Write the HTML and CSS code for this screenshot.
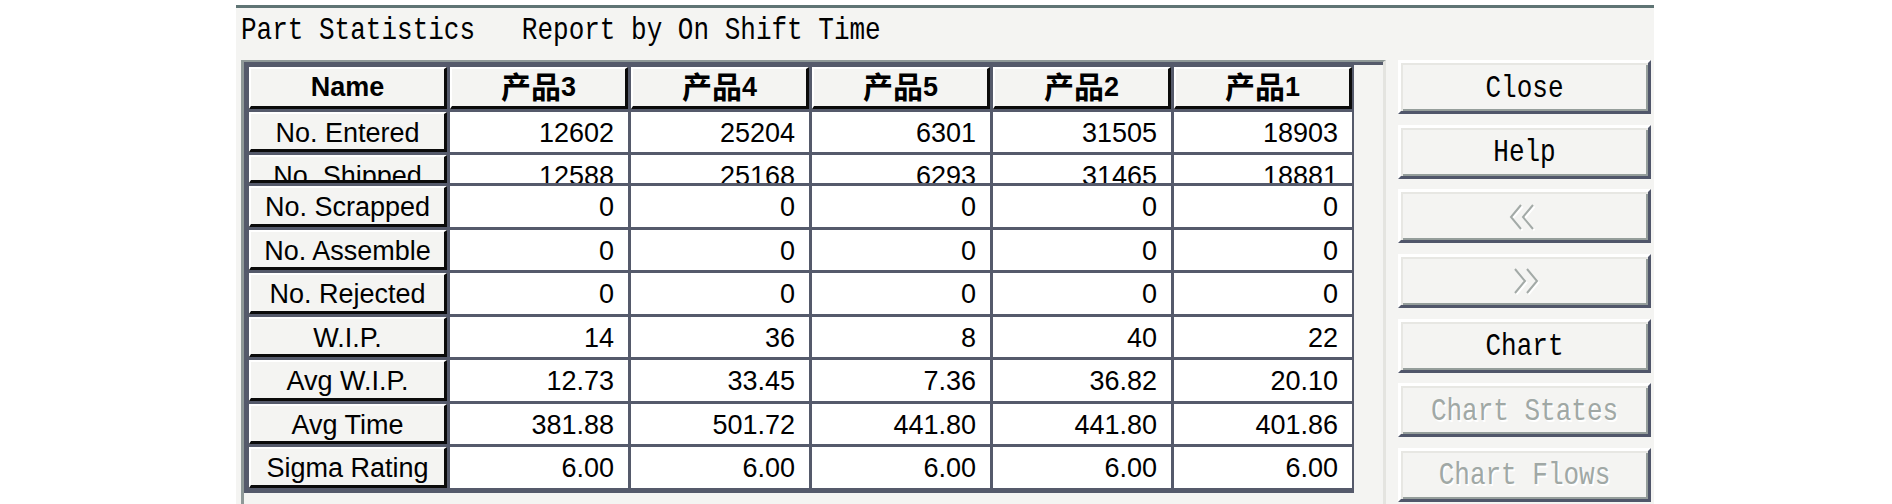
FILE: index.html
```html
<!DOCTYPE html>
<html>
<head>
<meta charset="utf-8">
<link rel="stylesheet" href="styles.css">
</head>
<body>
<div class="page">
  <div class="dialog">
    <div class="title"><span class="mono">Part Statistics   Report by On Shift Time</span></div>
    <div class="main">
      <div class="frame">
        <div class="frame-in">
          <div class="grid">
            <div class="hd bold">Name</div>
            <div class="hd bold"><span class="cjk">产品</span>3</div>
            <div class="hd bold"><span class="cjk">产品</span>4</div>
            <div class="hd bold"><span class="cjk">产品</span>5</div>
            <div class="hd bold"><span class="cjk">产品</span>2</div>
            <div class="hd bold"><span class="cjk">产品</span>1</div>

            <div class="lbl">No. Entered</div>
            <div class="c">12602</div><div class="c">25204</div><div class="c">6301</div><div class="c">31505</div><div class="c">18903</div>

            <div class="lbl">No. Shipped</div>
            <div class="c">12588</div><div class="c">25168</div><div class="c">6293</div><div class="c">31465</div><div class="c">18881</div>

            <div class="lbl">No. Scrapped</div>
            <div class="c">0</div><div class="c">0</div><div class="c">0</div><div class="c">0</div><div class="c">0</div>

            <div class="lbl">No. Assemble</div>
            <div class="c">0</div><div class="c">0</div><div class="c">0</div><div class="c">0</div><div class="c">0</div>

            <div class="lbl">No. Rejected</div>
            <div class="c">0</div><div class="c">0</div><div class="c">0</div><div class="c">0</div><div class="c">0</div>

            <div class="lbl">W.I.P.</div>
            <div class="c">14</div><div class="c">36</div><div class="c">8</div><div class="c">40</div><div class="c">22</div>

            <div class="lbl">Avg W.I.P.</div>
            <div class="c">12.73</div><div class="c">33.45</div><div class="c">7.36</div><div class="c">36.82</div><div class="c">20.10</div>

            <div class="lbl">Avg Time</div>
            <div class="c">381.88</div><div class="c">501.72</div><div class="c">441.80</div><div class="c">441.80</div><div class="c">401.86</div>

            <div class="lbl">Sigma Rating</div>
            <div class="c">6.00</div><div class="c">6.00</div><div class="c">6.00</div><div class="c">6.00</div><div class="c">6.00</div>
          </div>
        </div>
      </div>
      <div class="buttons">
        <div class="btn"><span class="mono">Close</span></div>
        <div class="btn"><span class="mono">Help</span></div>
        <div class="btn disabled">
          <svg class="chev" width="36" height="28" viewBox="0 0 36 28">
            <polyline points="14,2 4,14 14,26" fill="none" stroke="#ffffff" stroke-width="2" transform="translate(1.5,1.5)"/>
            <polyline points="26,2 16,14 26,26" fill="none" stroke="#ffffff" stroke-width="2" transform="translate(1.5,1.5)"/>
            <polyline points="14,2 4,14 14,26" fill="none" stroke="#a3aaa7" stroke-width="2"/>
            <polyline points="26,2 16,14 26,26" fill="none" stroke="#a3aaa7" stroke-width="2"/>
          </svg>
        </div>
        <div class="btn disabled">
          <svg class="chev" width="36" height="28" viewBox="0 0 36 28">
            <polyline points="8,2 18,14 8,26" fill="none" stroke="#ffffff" stroke-width="2" transform="translate(1.5,1.5)"/>
            <polyline points="20,2 30,14 20,26" fill="none" stroke="#ffffff" stroke-width="2" transform="translate(1.5,1.5)"/>
            <polyline points="8,2 18,14 8,26" fill="none" stroke="#a3aaa7" stroke-width="2"/>
            <polyline points="20,2 30,14 20,26" fill="none" stroke="#a3aaa7" stroke-width="2"/>
          </svg>
        </div>
        <div class="btn"><span class="mono">Chart</span></div>
        <div class="btn disabled"><span class="mono">Chart States</span></div>
        <div class="btn disabled"><span class="mono">Chart Flows</span></div>
      </div>
    </div>
  </div>
</div>
</body>
</html>
```

FILE: styles.css
```css
html, body {
  margin: 0;
  padding: 0;
  background: #ffffff;
  overflow: hidden;
}
body {
  width: 1892px;
  height: 504px;
  font-family: "Liberation Sans", Arial, sans-serif;
}
.page {
  padding: 5px 0 0 236px;
}
.dialog {
  width: 1418px;
  height: 520px;
  box-sizing: border-box;
  border-top: 3px solid #5f7474;
  background: #f4f4f2;
  padding-left: 5px;
}
.mono {
  font-family: "Liberation Mono", "DejaVu Sans Mono", monospace;
  font-size: 26px;
  line-height: 26px;
  display: inline-block;
  white-space: pre;
  transform: scaleY(1.18);
}
.title {
  height: 52px;
  box-sizing: border-box;
  padding-top: 7px;
  color: #000;
}
.title .mono {
  transform-origin: top left;
}
.main {
  display: flex;
  align-items: flex-start;
  gap: 12px;
}
.frame {
  width: 1145px;
  height: 460px;
  box-sizing: border-box;
  border-top: 2px solid #8f9998;
  border-left: 3px solid #8f9998;
  border-right: 3px solid #e4e4e0;
}
.frame-in {
  border-top: 3px solid #555a6b;
}
.grid {
  display: grid;
  width: max-content;
  grid-template-columns: 198px repeat(5, 178px);
  grid-template-rows: 42px 40px 28px repeat(7, 40.57px);
  gap: 3px;
  background: #555a6b;
  padding: 2px 2px 5px 5px;
}
.grid > div {
  font-size: 27px;
  line-height: 30px;
  color: #000;
  overflow: hidden;
  white-space: nowrap;
  box-sizing: border-box;
}
.hd, .lbl {
  background: #f4f4f2;
  border-top: 2px solid #ffffff;
  border-left: 2px solid #ffffff;
  border-right: 3px solid #0b0b0b;
  border-bottom: 3px solid #0b0b0b;
  text-align: center;
  padding-top: 4px;
}
.grid > .hd {
  overflow: visible;
  line-height: 30px;
  padding-top: 3px;
}
.bold {
  font-weight: 700;
}
.cjk {
  font-family: "Noto Sans CJK SC", sans-serif;
  font-size: 30px;
  font-weight: 700;
  line-height: 26px;
  vertical-align: -2px;
}
.c {
  background: #ffffff;
  text-align: right;
  padding: 6px 14px 0 0;
}
.buttons {
  width: 253px;
  display: flex;
  flex-direction: column;
  gap: 10.67px;
}
.btn {
  height: 54px;
  box-sizing: border-box;
  border-style: solid;
  border-width: 3px;
  border-color: #ffffff #50566a #50566a #ffffff;
  box-shadow: inset 2px 2px 0 #e7e7e3, inset -2px -2px 0 #959e9b;
  background: #f4f4f2;
  display: flex;
  align-items: center;
  justify-content: center;
  padding-top: 3px;
  color: #000;
}
.btn.disabled {
  color: #a0a8a5;
}
.btn.disabled .mono {
  text-shadow: 1.5px 1.5px 0 #ffffff;
}
.chev {
  display: block;
  margin-top: -2px;
}
```
